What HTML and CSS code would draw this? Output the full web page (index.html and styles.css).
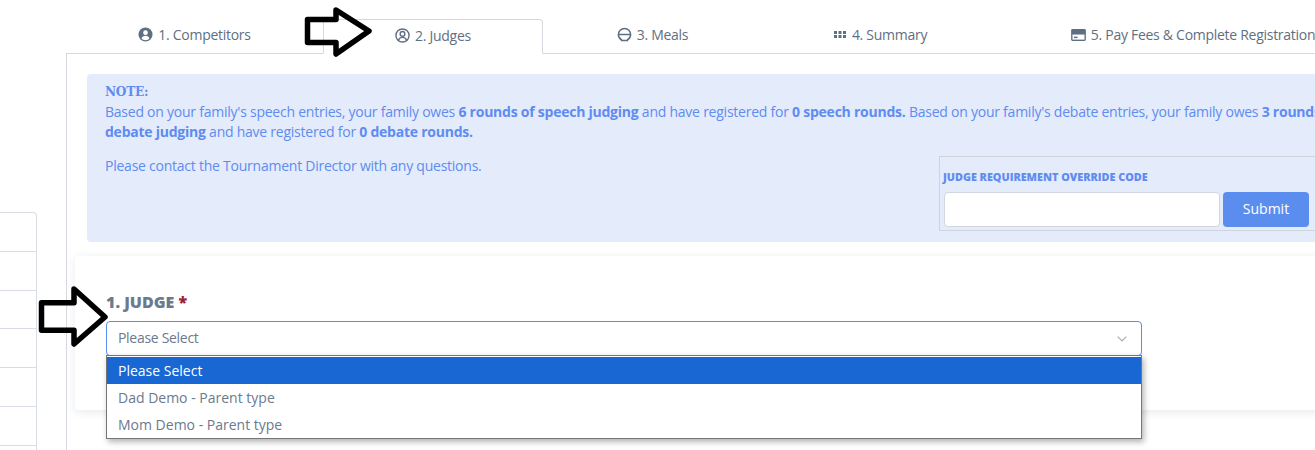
FILE: index.html
```html
<!DOCTYPE html>
<html lang="en">
<head>
<meta charset="utf-8">
<title>Judges</title>
<link rel="stylesheet" href="styles.css">
</head>
<body>
<div class="page">
  <aside class="side">
    <div class="side-row"></div>
    <div class="side-row"></div>
    <div class="side-row"></div>
    <div class="side-row"></div>
    <div class="side-row"></div>
    <div class="side-row"></div>
  </aside>
  <main class="main">
    <nav class="tabs">
      <a class="tab tab-1">
        <svg class="ico" viewBox="0 0 16 16"><circle cx="8" cy="8" r="7.500" fill="#5f6f82"/><circle cx="8" cy="6" r="2.500" fill="#fff"/><path d="M3.800 12.200c.5-2 2.200-3 4.200-3s3.700 1 4.200 3c-1 1.100-2.500 1.800-4.200 1.800s-3.200-.7-4.200-1.800z" fill="#fff"/></svg>
        1. Competitors
      </a>
      <a class="tab tab-2 active">
        <svg class="ico" viewBox="0 0 16 16" fill="none" stroke="#5f6f82" stroke-width="1.500"><circle cx="8" cy="8" r="7"/><circle cx="8" cy="6.300" r="2.500"/><path d="M3.700 13.200c.5-2.200 2.200-3.200 4.300-3.200s3.800 1 4.300 3.200"/></svg>
        2. Judges
      </a>
      <a class="tab tab-3">
        <svg class="ico" viewBox="0 0 16 16" fill="none" stroke="#5f6f82" stroke-width="1.600"><path d="M1.500 8a6.500 6.500 0 0 1 13 0c0 2.500-1.300 4.600-3.300 5.600v.9H4.800v-.9C2.800 12.600 1.500 10.500 1.500 8z"/><path d="M1 8h14"/></svg>
        3. Meals
      </a>
      <a class="tab tab-4">
        <svg class="ico ico-grid" viewBox="0 0 14 9" fill="#5f6f82"><rect x="1" y="1" width="3" height="3"/><rect x="5.500" y="1" width="3" height="3"/><rect x="10" y="1" width="3" height="3"/><rect x="1" y="5" width="3" height="3"/><rect x="5.500" y="5" width="3" height="3"/><rect x="10" y="5" width="3" height="3"/></svg>
        4. Summary
      </a>
      <a class="tab tab-5">
        <svg class="ico ico-card" viewBox="0 0 16 13"><path fill="#5f6f82" d="M1.500 0h13A1.500 1.500 0 0 1 16 1.500v10a1.500 1.500 0 0 1-1.500 1.500h-13A1.500 1.500 0 0 1 0 11.500v-10A1.500 1.500 0 0 1 1.500 0z"/><rect x="1.500" y="6" width="13" height="5.500" fill="#fff"/><rect x="3" y="8.300" width="4" height="1.600" fill="#5f6f82"/></svg>
        5. Pay Fees &amp; Complete Registration
      </a>
    </nav>
    <section class="panel">
      <div class="note">
        <h4 class="note-title">NOTE:</h4>
        <p class="note-text">Based on your family's speech entries, your family owes <b>6 rounds of speech judging</b> and have registered for <b>0 speech rounds.</b> Based on your family's debate entries, your family owes <b>3 rounds of<br>debate judging</b> and have registered for <b>0 debate rounds.</b></p>
        <div class="note-bottom">
          <p class="note-contact">Please contact the Tournament Director with any questions.</p>
          <form class="override">
            <label class="override-label">JUDGE REQUIREMENT OVERRIDE CODE</label>
            <div class="override-row">
              <div class="override-input"></div>
              <div class="override-btn">Submit</div>
            </div>
          </form>
        </div>
      </div>
      <div class="card">
        <div class="field-label">1. JUDGE <span class="req">*</span></div>
        <div class="select-wrap">
          <div class="select">
            <span class="select-value">Please Select</span>
            <svg class="chev" viewBox="0 0 10 6" fill="none" stroke="#a3aebd" stroke-width="1.200"><path d="M.7.7 5 5 9.300.7"/></svg>
          </div>
          <ul class="menu">
            <li class="opt selected">Please Select</li>
            <li class="opt">Dad Demo - Parent type</li>
            <li class="opt">Mom Demo - Parent type</li>
          </ul>
        </div>
      </div>
    </section>
  </main>
</div>
<svg class="arrow arrow-top" viewBox="0 0 70 54" fill="none" stroke="#000" stroke-width="5.500" stroke-linejoin="round"><path d="M4.500 14.500H33V5L66 26 33 49V37.500H4.500z"/></svg>
<svg class="arrow arrow-left" viewBox="0 0 72 64" fill="none" stroke="#000" stroke-width="5.500" stroke-linejoin="round"><path d="M3.500 17.700H36V4L67 32 36 59V45.200H3.500z"/></svg>
</body>
</html>
```
FILE: styles.css
```css
* { box-sizing: border-box; }
html, body { margin: 0; padding: 0; height: 450px; overflow: hidden; background: #fff; }
body { position: relative; width: 1315px; font-family: "Open Sans", sans-serif; font-size: 14px; color: #5f6f82; }
.page { display: flex; width: 1560px; height: 450px; }
.side { flex: 0 0 37px; margin-top: 212px; height: 238px; border: 1px solid #d8dce3; border-left: 0; border-bottom: 0; border-radius: 0 4px 0 0; }
.side-row { height: 38.800px; border-bottom: 1px solid #d8dce3; }
.main { flex: 0 0 1430px; margin-left: 29px; margin-top: 19px; }
.tabs { display: flex; height: 35px; }
.tab { display: flex; align-items: center; justify-content: center; gap: 5px; height: 35px; padding-bottom: 3px; border-bottom: 1px solid #d5d8de; color: #5f6f82; letter-spacing: -.28px; white-space: nowrap; }
.tab-1 { flex: 0 0 257px; }
.tab-2 { flex: 0 0 220px; }
.tab-3 { flex: 0 0 219px; }
.tab-4 { flex: 0 0 236px; }
.tab-5 { flex: 0 0 390px; }
.tab.active { border: 1px solid #d5d8de; border-bottom-color: #fff; border-radius: 4px 4px 0 0; }
.ico { width: 15px; height: 15px; flex: none; }
.ico-grid { width: 14px; height: 9px; }
.ico-card { width: 15px; height: 12px; }
.panel { border-left: 1px solid #d5d8de; height: 400px; padding: 20px 0 0 8px; }
.note { margin-left: 12px; height: 168px; padding: 6px 0 0 18px; background: #e4ebfb; border-radius: 4px; color: #5e8cf0; line-height: 20px; letter-spacing: -.24px; }
.note-title { margin: 0; font-family: "DejaVu Serif Condensed", "DejaVu Serif", serif; font-size: 13.500px; font-weight: 700; line-height: 22px; position: relative; top: 0; }
.note-text { margin: 0; white-space: nowrap; }
.note-bottom { display: flex; align-items: flex-start; margin-top: 14px; }
.note-contact { margin: 0; flex: 0 0 834px; }
.override { flex: 0 0 420px; height: 75px; padding: 11px 4px 0; border: 1px solid #cfd3dc; letter-spacing: 0; }
.override-label { display: block; font-size: 10.800px; font-weight: 800; line-height: 18px; margin-left: -1px; }
.override-row { display: flex; gap: 3px; margin-top: 6px; }
.override-input { flex: 0 0 276px; height: 35px; background: #fff; border: 1px solid #d2d6de; border-radius: 4px; }
.override-btn { flex: 0 0 86px; height: 35px; background: #5b8def; border-radius: 4px; color: #fff; line-height: 34px; text-align: center; }
.card { height: 154px; margin-top: 14px; padding: 35px 0 0 31px; background: #fff; border-radius: 4px; box-shadow: 0 2px 10px rgba(60, 70, 100, .12); }
.field-label { font-size: 16px; font-weight: 800; line-height: 22px; color: #6b7a8d; }
.req { color: #a3202f; }
.select-wrap { position: relative; width: 1036px; margin-top: 8px; }
.select { display: flex; align-items: center; justify-content: space-between; height: 35px; padding: 0 14px 2px 11px; border: 1px solid #5b8def; border-radius: 4px; background: #fff; color: #6b7a8d; }
.select-value { letter-spacing: -.3px; }
.chev { width: 10px; height: 6px; margin-top: 2px; }
.menu { position: absolute; left: 0; top: 34px; width: 1036px; margin: 0; padding: 1px 0 0; list-style: none; background: #fff; border: 1px solid #767676; box-shadow: 2px 3px 6px rgba(0, 0, 0, .3); }
.opt { height: 27px; padding-left: 11px; line-height: 27px; color: #6b7a8d; }
.opt.selected { background: #1967d2; color: #fff; }
.arrow { position: absolute; }
.arrow-top { left: 303px; top: 5px; width: 70px; height: 54px; }
.arrow-left { left: 38px; top: 285px; width: 72px; height: 64px; }
```
